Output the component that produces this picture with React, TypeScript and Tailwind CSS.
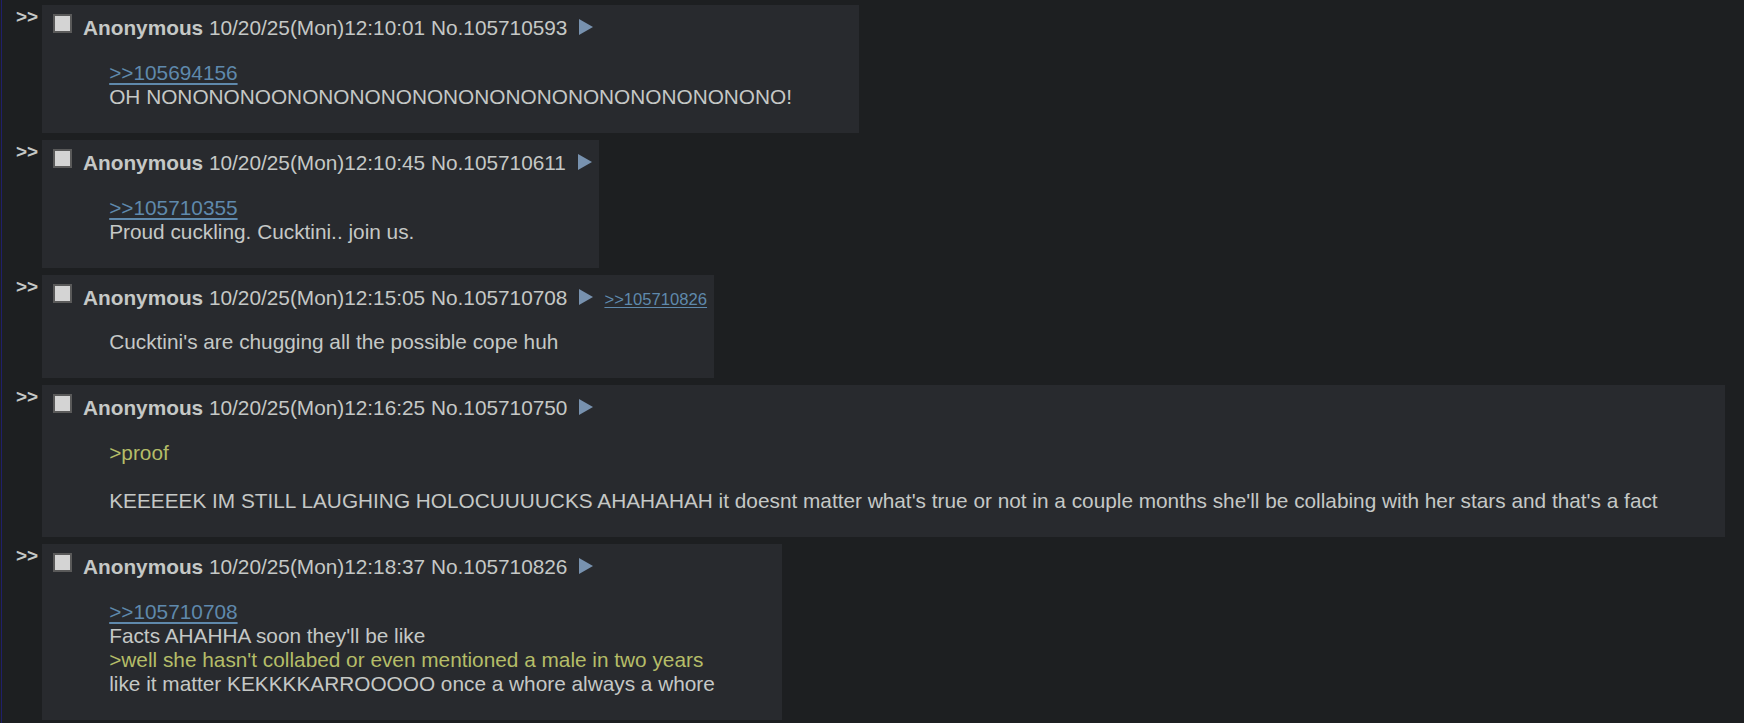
const posts = [
  {
    time: "10/20/25(Mon)12:10:01",
    no: "105710593",
    lines: [
      { kind: "link", text: ">>105694156" },
      { kind: "text", text: "OH NONONONOONONONONONONONONONONONONONONONONO!" },
    ],
  },
  {
    time: "10/20/25(Mon)12:10:45",
    no: "105710611",
    lines: [
      { kind: "link", text: ">>105710355" },
      { kind: "text", text: "Proud cuckling. Cucktini.. join us." },
    ],
  },
  {
    time: "10/20/25(Mon)12:15:05",
    no: "105710708",
    backlink: ">>105710826",
    lines: [{ kind: "text", text: "Cucktini's are chugging all the possible cope huh" }],
  },
  {
    time: "10/20/25(Mon)12:16:25",
    no: "105710750",
    lines: [
      { kind: "quote", text: ">proof" },
      { kind: "blank", text: "" },
      {
        kind: "text",
        text: "KEEEEEK IM STILL LAUGHING HOLOCUUUUCKS AHAHAHAH it doesnt matter what's true or not in a couple months she'll be collabing with her stars and that's a fact",
      },
    ],
  },
  {
    time: "10/20/25(Mon)12:18:37",
    no: "105710826",
    lines: [
      { kind: "link", text: ">>105710708" },
      { kind: "text", text: "Facts AHAHHA soon they'll be like" },
      { kind: "quote", text: ">well she hasn't collabed or even mentioned a male in two years" },
      { kind: "text", text: "like it matter KEKKKKARROOOOO once a whore always a whore" },
    ],
  },
];

type Line = { kind: string; text: string };
type PostData = { time: string; no: string; backlink?: string; lines: Line[] };

function BodyLine({ line }: { line: Line }) {
  if (line.kind === "link")
    return (
      <div>
        <a className="text-[#5f89ac] underline underline-offset-[3px]">{line.text}</a>
      </div>
    );
  if (line.kind === "quote") return <div className="text-[#b5bd68]">{line.text}</div>;
  if (line.kind === "blank") return <div className="h-[24px]" />;
  return <div>{line.text}</div>;
}

function Post({ post }: { post: PostData }) {
  return (
    <div className="flex items-start mb-[7px]">
      <div className="w-[26px] shrink-0 text-[19px] leading-[24px] font-bold text-[#c5c8c6]">&gt;&gt;</div>
      <div className="bg-[#282a2e] p-[3.2px]">
        {/* post info */}
        <div className="flex items-start pt-[5.8px] pr-[4px]">
          <div className="ml-[7.8px] w-[19px] h-[19px] shrink-0 border-2 border-[#5a5a5a] bg-[#d4d4d4]" />
          <div className="ml-[11px] mt-[2px] h-[24px] leading-[24px] whitespace-nowrap">
            <span className="font-bold">Anonymous</span> {post.time} No.{post.no}
            <svg
              className="inline-block align-baseline ml-[12px]"
              width="14"
              height="16"
              viewBox="0 0 14 16"
            >
              <path d="M0 0 L14 8 L0 16 Z" fill="#7892af" />
            </svg>
            {post.backlink && (
              <a className="ml-[11px] text-[16.64px] leading-none text-[#5f89ac] underline underline-offset-2">
                {post.backlink}
              </a>
            )}
          </div>
        </div>
        <div className="mx-[64px] my-[20.8px] leading-[24px]">
          {post.lines.map((line, i) => (
            <BodyLine key={i} line={line} />
          ))}
        </div>
      </div>
    </div>
  );
}

export default function App() {
  return (
    <div
      className="min-h-[723px] bg-[#1d1f21] text-[#c5c8c6] text-[20.8px]"
      style={{ fontFamily: '"Liberation Sans", Arial, Helvetica, sans-serif' }}
    >
      <div className="ml-[1px] min-h-[723px] border-l border-[#1f1f6a] pl-[14px] pt-[5px]">
        {posts.map((post) => (
          <Post key={post.no} post={post} />
        ))}
      </div>
    </div>
  );
}
